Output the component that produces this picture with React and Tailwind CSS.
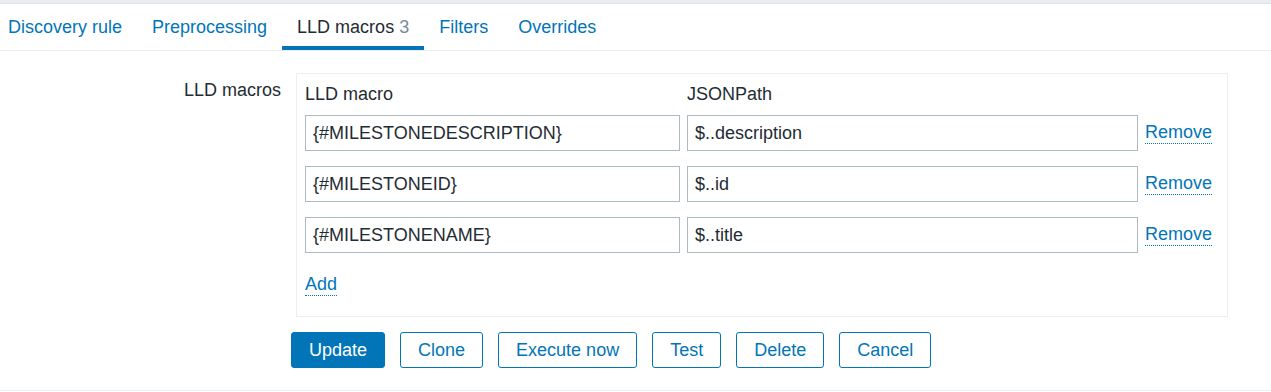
import React from "react";

const tabs = [
  { id: "rule", label: "Discovery rule" },
  { id: "prep", label: "Preprocessing" },
  { id: "macros", label: "LLD macros", count: 3, active: true },
  { id: "filters", label: "Filters" },
  { id: "overrides", label: "Overrides" },
];

const macros = [
  { id: 1, macro: "{#MILESTONEDESCRIPTION}", path: "$..description" },
  { id: 2, macro: "{#MILESTONEID}", path: "$..id" },
  { id: 3, macro: "{#MILESTONENAME}", path: "$..title" },
];

const buttons = ["Clone", "Execute now", "Test", "Delete", "Cancel"];

function LinkText({ children }) {
  return (
    <span className="inline-block cursor-pointer border-b border-dotted border-[#0275b8] leading-[21px] text-[#0275b8]">
      {children}
    </span>
  );
}

export default function App() {
  return (
    <div
      className="h-[392px] w-[1271px] overflow-hidden bg-white text-[18px] text-[#1f2c33]"
      style={{ fontFamily: '"Liberation Sans", Arial, sans-serif' }}
    >
      {/* top strip */}
      <div className="h-[4px] border-b border-[#dfe4e7] bg-[#ebeef0]" />

      {/* Tabs */}
      <div className="flex h-[47px] border-b border-[#ebeef0]">
        <div className="-ml-[7px] flex">
          {tabs.map((tab) => (
            <div
              key={tab.id}
              className={
                tab.active
                  ? "h-[46px] cursor-pointer border-b-4 border-[#0275b8] px-[15px] pt-[13px] leading-[21px] text-[#1f2c33]"
                  : "h-[46px] cursor-pointer px-[15px] pt-[13px] leading-[21px] text-[#0275b8]"
              }
            >
              {tab.label}
              {tab.count && <span className="ml-[5px] text-[#768d99]">{tab.count}</span>}
            </div>
          ))}
        </div>
      </div>

      {/* Form */}
      <div className="flex pt-[22px]">
        <div className="w-[281px] pt-[7px] text-right leading-[21px]">LLD macros</div>
        <div className="ml-[15px] w-[932px] border border-[#ebeef0] pl-[8px] pr-[15px] pt-[10px] pb-[18px]">
          <div className="flex leading-[21px]">
            <div className="w-[375px]">LLD macro</div>
            <div className="ml-[7px] w-[451px]">JSONPath</div>
          </div>
          <div className="mt-[10px] flex flex-col gap-[15px]">
            {macros.map((row) => (
              <div key={row.id} className="flex h-[36px] items-center">
                <div className="flex h-[36px] w-[375px] items-center border border-[#acbbc2] px-[7px] leading-[21px]">
                  {row.macro}
                </div>
                <div className="ml-[7px] flex h-[36px] w-[451px] items-center border border-[#acbbc2] px-[7px] leading-[21px]">
                  {row.path}
                </div>
                <div className="mb-[2px] ml-[7px]">
                  <LinkText>Remove</LinkText>
                </div>
              </div>
            ))}
          </div>
          <div className="mt-[18px]">
            <LinkText>Add</LinkText>
          </div>
        </div>
      </div>

      {/* Buttons */}
      <div className="ml-[291px] mt-[15px] flex gap-[15px]">
        <button className="h-[36px] rounded-[3px] border border-[#0275b8] bg-[#0275b8] px-[17px] text-white">
          Update
        </button>
        {buttons.map((b) => (
          <button
            key={b}
            className="h-[36px] rounded-[3px] border border-[#0275b8] bg-white px-[17px] text-[#0275b8]"
          >
            {b}
          </button>
        ))}
      </div>

      <div className="mt-[22px] h-[2px] border-t border-[#ebeef0]" />
    </div>
  );
}
